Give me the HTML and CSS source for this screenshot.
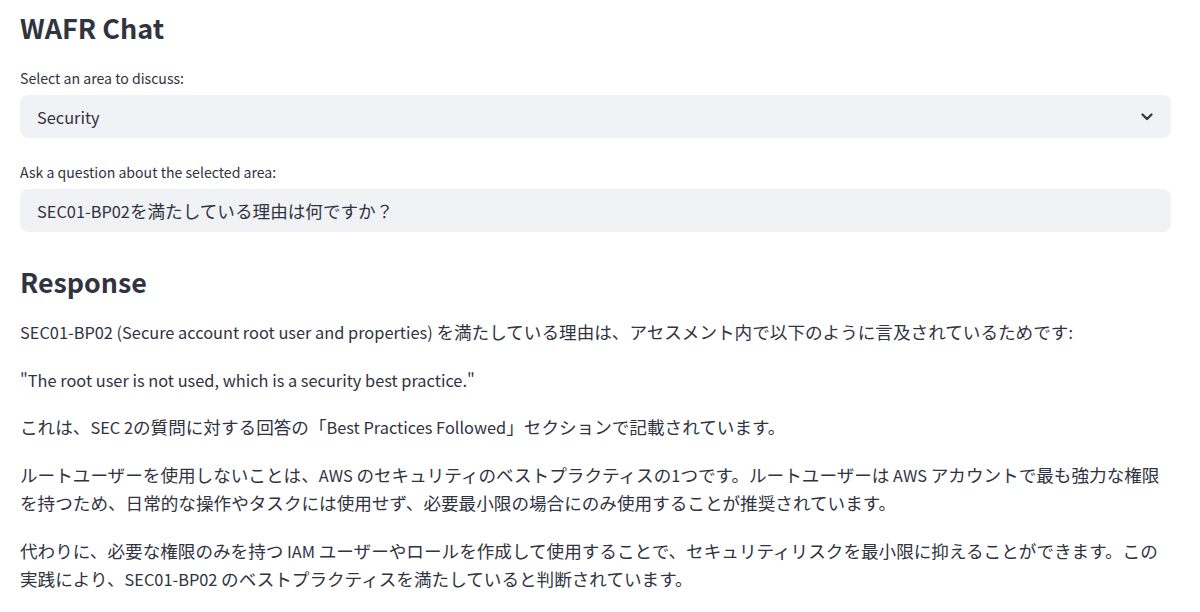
FILE: index.html
```html
<!DOCTYPE html>
<html lang="ja">
    <head>
        <meta charset="UTF-8">
        <title>WAFR Chat</title>
        <link rel="stylesheet" href="styles.css">
    </head>
    <body>
        <div class="main">
            <h1 class="title">WAFR Chat</h1>

            <div class="field">
                <label class="label">Select an area to discuss:</label>
                <div class="select">
                    <span class="en">Security</span>
                    <svg class="chevron" width="12" height="8" viewBox="0 0 12 8">
                        <path d="M1.5 1.5 L6 6 L10.5 1.5" fill="none" stroke="#31333f" stroke-width="2.2" stroke-linecap="round" stroke-linejoin="round"/>
                    </svg>
                </div>
            </div>

            <div class="field">
                <label class="label">Ask a question about the selected area:</label>
                <div class="input"><span><span class="en">SEC01-BP02</span>を満たしている理由は何ですか？</span></div>
            </div>

            <h2 class="subtitle">Response</h2>

            <div class="answer">
                <p><span class="en">SEC01-BP02 (Secure account root user and properties) </span>を満たしている理由は、アセスメント内で以下のように言及されているためです<span class="en">:</span></p>
                <p><span class="en">"The root user is not used, which is a security best practice."</span></p>
                <p>これは、<span class="en">SEC 2</span>の質問に対する回答の「<span class="en">Best Practices Followed</span>」セクションで記載されています。</p>
                <p>ルートユーザーを使用しないことは、<span class="en">AWS </span>のセキュリティのベストプラクティスの<span class="en">1</span>つです。ルートユーザーは<span class="en"> AWS </span>アカウントで最も強力な権限を持つため、日常的な操作やタスクには使用せず、必要最小限の場合にのみ使用することが推奨されています。</p>
                <p>代わりに、必要な権限のみを持つ<span class="en"> IAM </span>ユーザーやロールを作成して使用することで、セキュリティリスクを最小限に抑えることができます。この実践により、<span class="en">SEC01-BP02 </span>のベストプラクティスを満たしていると判断されています。</p>
            </div>
        </div>
    </body>
</html>
```

FILE: styles.css
```css
body {
    margin: 0;
    background: #fff;
    color: #31333f;
    font-family: "Noto Sans CJK JP", "Noto Sans", sans-serif;
}

.main {
    padding: 10px 29px 0 20px;
}

.en {
    font-size: 0.93em;
}

.title {
    margin: 0;
    font-size: 27px;
    line-height: 36px;
    font-weight: 700;
}

.field {
    margin-top: 22px;
}

.field + .field {
    margin-top: 24px;
}

.label {
    display: block;
    margin-bottom: 7px;
    font-size: 14.1px;
    line-height: 20px;
}

.select,
.input {
    display: flex;
    align-items: center;
    height: 43px;
    padding: 0 16px 0 17px;
    border-radius: 8px;
    background-color: #f0f2f6;
    font-size: 17.6px;
}

.select {
    justify-content: space-between;
}

.chevron {
    margin-right: 2px;
}

.subtitle {
    margin: 31px 0 17px;
    font-size: 26.8px;
    line-height: 38px;
    font-weight: 700;
}

.answer p {
    margin: 0 0 19px;
    font-size: 17.6px;
    line-height: 28.5px;
}
```
